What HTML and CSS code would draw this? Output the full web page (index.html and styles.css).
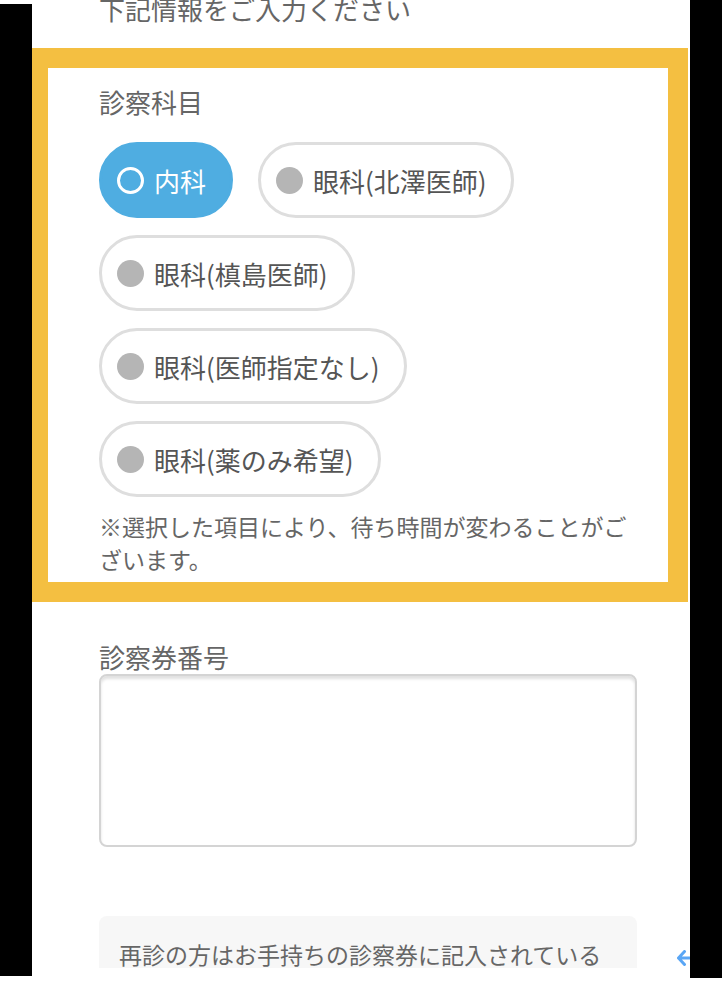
FILE: index.html
```html
<!DOCTYPE html>
<html lang="ja">
<head>
<meta charset="utf-8">
<title>診察受付</title>
<link rel="stylesheet" href="styles.css">
</head>
<body>
<div class="page">
  <div class="strip strip-left"></div>
  <main class="screen">
    <p class="lead">下記情報をご入力ください</p>
    <section class="highlight">
      <div class="field-label">診察科目</div>
      <div class="pills">
        <span class="pill pill-active"><span class="ring"></span>内科</span>
        <span class="pill"><span class="dot"></span>眼科(北澤医師)</span>
        <span class="pill"><span class="dot"></span>眼科(槙島医師)</span>
        <span class="pill"><span class="dot"></span>眼科(医師指定なし)</span>
        <span class="pill"><span class="dot"></span>眼科(薬のみ希望)</span>
      </div>
      <p class="note">※選択した項目により、待ち時間が変わることがございます。</p>
    </section>
    <section class="ticket">
      <div class="field-label ticket-label">診察券番号</div>
      <div class="input"></div>
      <div class="info">再診の方はお手持ちの診察券に記入されている</div>
    </section>
    <svg class="back-arrow" width="13" height="16" viewBox="0 0 13 16"><path d="M7.5 1.5 L1.5 8 L7.5 14.5 M1.5 8 H13" fill="none" stroke="#5aa6f5" stroke-width="3" stroke-linecap="round" stroke-linejoin="round"/></svg>
  </main>
  <div class="strip strip-right"></div>
</div>
</body>
</html>
```
FILE: styles.css
```css
* { box-sizing: border-box; }
html, body { margin: 0; padding: 0; background: #fff; }
body {
  font-family: "Noto Sans CJK JP", "Noto Sans", sans-serif;
  color: #666;
}
.page {
  display: flex;
  align-items: flex-start;
  width: 722px;
  height: 982px;
  overflow: hidden;
}
.strip { width: 32px; flex: none; background: #000; }
.strip-left { margin-top: 4px; height: 972px; }
.strip-right { height: 978px; }
.screen {
  position: relative;
  width: 658px;
  flex: none;
  height: 968px;
  overflow: hidden;
  background: #fff;
}
.lead {
  margin: -10px 0 20px;
  padding-left: 67px;
  font-size: 26px;
  line-height: 38px;
  color: #666;
}
.highlight {
  margin-right: 2px;
  border-style: solid;
  border-color: #f4bf41;
  border-width: 20px 20px 20px 16px;
  padding: 16px 28px 6px 51px;
  background: #fff;
}
.field-label {
  font-size: 26px;
  line-height: 36px;
  color: #666;
}
.pills {
  margin-top: 22px;
  display: flex;
  flex-wrap: wrap;
  column-gap: 25px;
  row-gap: 17px;
}
.pill {
  display: inline-flex;
  align-items: center;
  gap: 10px;
  height: 76px;
  padding: 0 24px 0 15px;
  border: 3px solid #dedede;
  border-radius: 38px;
  background: #fff;
  font-size: 26px;
  color: #555;
  white-space: nowrap;
}
.pill-active {
  background: #4fade1;
  border-color: #4fade1;
  color: #fff;
}
.dot {
  width: 27px;
  height: 27px;
  border-radius: 50%;
  background: #b5b5b5;
  flex: none;
}
.ring {
  width: 27px;
  height: 27px;
  border-radius: 50%;
  border: 3px solid #fff;
  flex: none;
}
.note {
  margin: 13px 0 0;
  font-size: 23px;
  line-height: 33px;
  color: #666;
}
.ticket {
  padding: 0 53px 0 67px;
}
.ticket-label {
  margin-top: 37px;
  line-height: 35px;
}
.input {
  height: 173px;
  border: 2px solid #d4d4d4;
  border-radius: 8px;
  box-shadow: inset 0 3px 3px rgba(0, 0, 0, 0.12);
  background: #fff;
}
.info {
  margin-top: 69px;
  padding: 22px 20px;
  border-radius: 8px;
  background: #f7f7f7;
  font-size: 23px;
  line-height: 33px;
  color: #666;
}
.back-arrow {
  position: absolute;
  left: 645px;
  top: 950px;
}
```
